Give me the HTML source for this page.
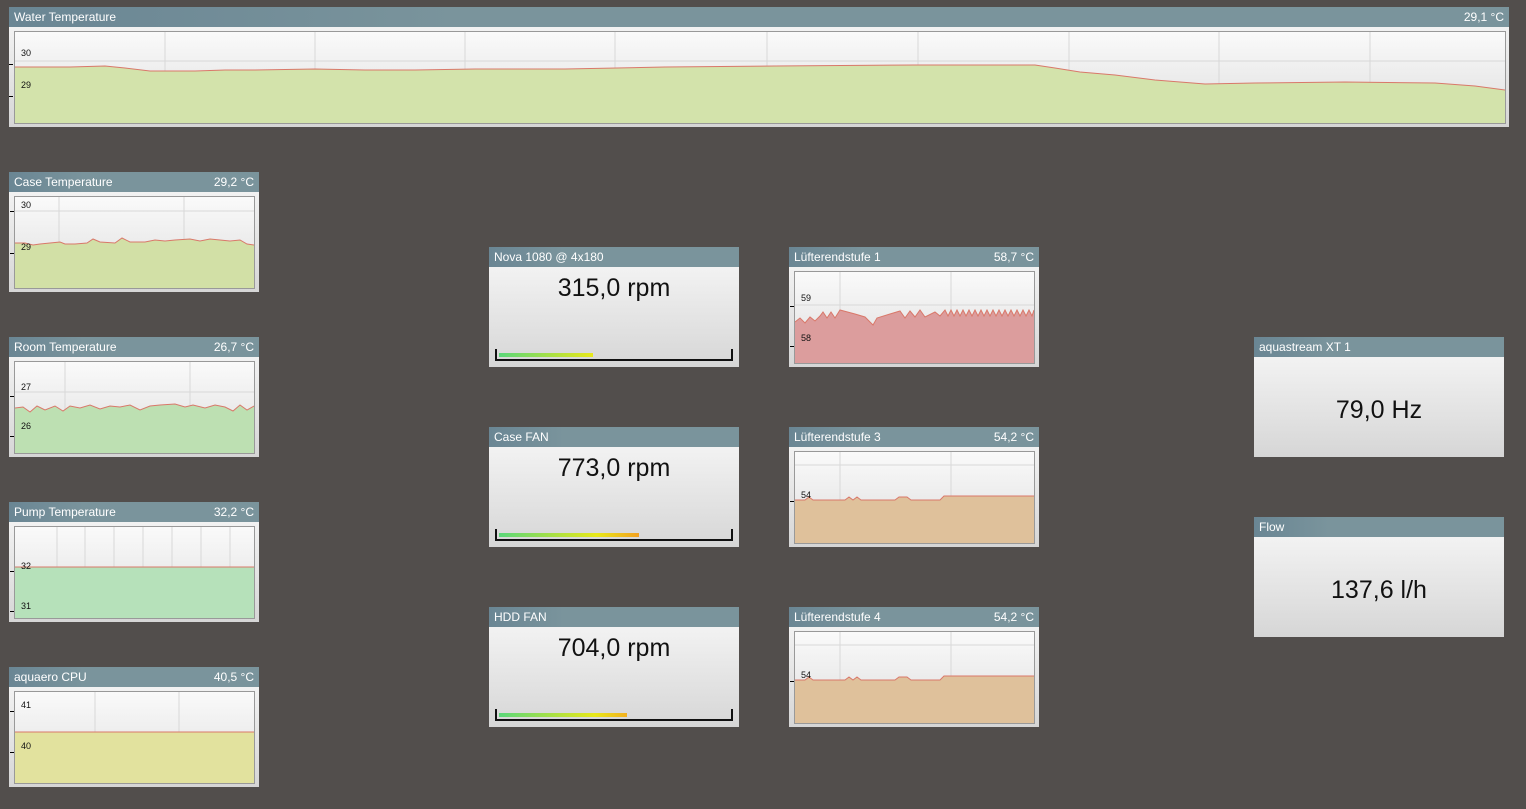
<!DOCTYPE html>
<html><head><meta charset="utf-8"><style>
body{margin:0;width:1526px;height:809px;background:#524e4c;font-family:"Liberation Sans",sans-serif;position:relative;overflow:hidden}
.p{position:absolute;width:250px;height:120px;background:linear-gradient(#f8f8f8,#d6d6d6)}
.h{height:20px;background:linear-gradient(90deg,#6a8694,#7a949c 30%,#7a949c);color:#fff;font-size:12px;line-height:21px;padding:0 5px;display:flex;justify-content:space-between}
.c{position:absolute;left:5px;top:24px;width:239px;height:91px;border:1px solid #999;background:linear-gradient(#fafafa,#dedede)}
.c svg{position:absolute;left:0;top:0}
.l{position:absolute;left:6px;font-size:9px;color:#111}
.t{position:absolute;left:-5px;width:4px;height:1px;background:#000}
.v{position:absolute;left:0;right:0;text-align:center;font-size:25px;color:#111}
.bar{position:absolute;left:6px;right:6px;top:102px;height:10px;border:2px solid #111;border-top:none}
.bar div{position:absolute;left:2px;bottom:2px;height:4px}
</style></head><body>

<div class="p" style="left:9px;top:7px;width:1500px">
<div class="h"><span>Water Temperature</span><span>29,1 °C</span></div>
<div class="c" style="width:1490px">
<svg width="1490" height="91"><g stroke="#d8d8d8"><line x1="150" y1="0" x2="150" y2="91"/><line x1="300" y1="0" x2="300" y2="91"/><line x1="450" y1="0" x2="450" y2="91"/><line x1="600" y1="0" x2="600" y2="91"/><line x1="752" y1="0" x2="752" y2="91"/><line x1="903" y1="0" x2="903" y2="91"/><line x1="1054" y1="0" x2="1054" y2="91"/><line x1="1204" y1="0" x2="1204" y2="91"/><line x1="1355" y1="0" x2="1355" y2="91"/><line x1="0" y1="29" x2="1490" y2="29"/></g>
<polygon fill="#d3e3ab" points="0,35 55,35 90,34 110,36 135,39 180,39 210,38 240,38 300,37 350,38 400,38 460,37 550,37 650,35 760,34 900,33 1020,33 1040,36 1065,40 1100,43 1140,48 1190,52 1240,51 1330,50 1420,51 1460,54 1490,58 1490,91 0,91"/>
<polyline fill="none" stroke="#d9786a" points="0,35 55,35 90,34 110,36 135,39 180,39 210,38 240,38 300,37 350,38 400,38 460,37 550,37 650,35 760,34 900,33 1020,33 1040,36 1065,40 1100,43 1140,48 1190,52 1240,51 1330,50 1420,51 1460,54 1490,58"/></svg>
<span class="l" style="top:16px">30</span><span class="l" style="top:48px">29</span>
<div class="t" style="top:32px;left:-6px"></div><div class="t" style="top:64px;left:-6px"></div></div>
</div>

<div class="p" style="left:9px;top:172px">
<div class="h"><span>Case Temperature</span><span>29,2 °C</span></div>
<div class="c"><svg width="239" height="91"><g stroke="#d8d8d8"><line x1="44" y1="0" x2="44" y2="91"/><line x1="169" y1="0" x2="169" y2="91"/><line x1="0" y1="14" x2="239" y2="14"/></g>
<polygon fill="#d2e0a6" points="0,46 10,46 18,48 25,47 35,46 45,45 50,47 60,47 72,46 78,42 85,45 100,46 107,41 115,45 130,45 140,43 150,44 160,43 175,42 185,44 195,42 205,43 215,44 225,43 232,47 239,48 239,91 0,91"/>
<polyline fill="none" stroke="#d9786a" points="0,46 10,46 18,48 25,47 35,46 45,45 50,47 60,47 72,46 78,42 85,45 100,46 107,41 115,45 130,45 140,43 150,44 160,43 175,42 185,44 195,42 205,43 215,44 225,43 232,47 239,48"/></svg>
<span class="l" style="top:3px">30</span><span class="l" style="top:45px">29</span><div class="t" style="top:14px"></div><div class="t" style="top:56px"></div></div></div>

<div class="p" style="left:9px;top:337px">
<div class="h"><span>Room Temperature</span><span>26,7 °C</span></div>
<div class="c"><svg width="239" height="91"><g stroke="#d8d8d8"><line x1="50" y1="0" x2="50" y2="91"/><line x1="175" y1="0" x2="175" y2="91"/><line x1="0" y1="30" x2="239" y2="30"/></g>
<polygon fill="#bde0b2" points="0,46 8,45 15,50 22,44 30,48 40,44 48,49 55,44 65,46 75,43 85,47 95,44 105,45 115,43 125,48 135,44 145,43 160,42 170,45 178,43 190,46 200,43 210,45 218,49 225,43 232,48 239,44 239,91 0,91"/>
<polyline fill="none" stroke="#d9786a" points="0,46 8,45 15,50 22,44 30,48 40,44 48,49 55,44 65,46 75,43 85,47 95,44 105,45 115,43 125,48 135,44 145,43 160,42 170,45 178,43 190,46 200,43 210,45 218,49 225,43 232,48 239,44"/></svg>
<span class="l" style="top:20px">27</span><span class="l" style="top:59px">26</span><div class="t" style="top:34px"></div><div class="t" style="top:74px"></div></div></div>

<div class="p" style="left:9px;top:502px">
<div class="h"><span>Pump Temperature</span><span>32,2 °C</span></div>
<div class="c"><svg width="239" height="91"><g stroke="#d8d8d8"><line x1="42" y1="0" x2="42" y2="91"/><line x1="70" y1="0" x2="70" y2="91"/><line x1="99" y1="0" x2="99" y2="91"/><line x1="128" y1="0" x2="128" y2="91"/><line x1="157" y1="0" x2="157" y2="91"/><line x1="186" y1="0" x2="186" y2="91"/><line x1="215" y1="0" x2="215" y2="91"/></g>
<rect y="40" width="239" height="51" fill="#b6e1ba"/><line x1="0" y1="40" x2="239" y2="40" stroke="#d9786a"/></svg>
<span class="l" style="top:34px">32</span><span class="l" style="top:74px">31</span><div class="t" style="top:44px"></div><div class="t" style="top:84px"></div></div></div>

<div class="p" style="left:9px;top:667px">
<div class="h"><span>aquaero CPU</span><span>40,5 °C</span></div>
<div class="c"><svg width="239" height="91"><g stroke="#d8d8d8"><line x1="80" y1="0" x2="80" y2="91"/><line x1="164" y1="0" x2="164" y2="91"/></g>
<rect y="40" width="239" height="51" fill="#e2e29e"/><line x1="0" y1="40" x2="239" y2="40" stroke="#d9786a"/></svg>
<span class="l" style="top:8px">41</span><span class="l" style="top:49px">40</span><div class="t" style="top:19px"></div><div class="t" style="top:60px"></div></div></div>

<div class="p" style="left:489px;top:247px"><div class="h"><span>Nova 1080 @ 4x180</span><span></span></div>
<div class="v" style="top:27px">315,0 rpm</div><div class="bar"><div style="width:94px;background:linear-gradient(90deg,#5ad77a,#e8e81a)"></div></div></div>
<div class="p" style="left:489px;top:427px"><div class="h"><span>Case FAN</span><span></span></div>
<div class="v" style="top:27px">773,0 rpm</div><div class="bar"><div style="width:140px;background:linear-gradient(90deg,#5ad77a,#e8e81a 70%,#f2a020)"></div></div></div>
<div class="p" style="left:489px;top:607px"><div class="h"><span>HDD FAN</span><span></span></div>
<div class="v" style="top:27px">704,0 rpm</div><div class="bar"><div style="width:128px;background:linear-gradient(90deg,#5ad77a,#e8e81a 75%,#f2b020)"></div></div></div>

<div class="p" style="left:789px;top:247px">
<div class="h"><span>Lüfterendstufe 1</span><span>58,7 °C</span></div>
<div class="c"><svg width="239" height="91"><g stroke="#d8d8d8"><line x1="45" y1="0" x2="45" y2="91"/><line x1="156" y1="0" x2="156" y2="91"/><line x1="0" y1="33" x2="239" y2="33"/></g>
<polygon fill="#dc9d9d" points="0,50 5,46 10,51 15,45 20,49 25,44 28,40 32,46 36,40 40,46 45,38 60,42 70,45 78,53 82,46 95,42 105,39 110,46 115,39 120,45 125,38 130,45 140,40 145,44 150,38 153,44 156,38 159,44 162,38 165,44 168,38 171,44 174,38 177,44 180,38 183,44 186,38 189,44 192,38 195,44 198,38 201,44 204,38 207,44 210,38 213,44 216,38 219,44 222,38 225,44 228,38 231,44 234,38 237,44 239,38 239,91 0,91"/>
<polyline fill="none" stroke="#d9786a" points="0,50 5,46 10,51 15,45 20,49 25,44 28,40 32,46 36,40 40,46 45,38 60,42 70,45 78,53 82,46 95,42 105,39 110,46 115,39 120,45 125,38 130,45 140,40 145,44 150,38 153,44 156,38 159,44 162,38 165,44 168,38 171,44 174,38 177,44 180,38 183,44 186,38 189,44 192,38 195,44 198,38 201,44 204,38 207,44 210,38 213,44 216,38 219,44 222,38 225,44 228,38 231,44 234,38 237,44 239,38"/></svg>
<span class="l" style="top:21px">59</span><span class="l" style="top:61px">58</span><div class="t" style="top:34px"></div><div class="t" style="top:74px"></div></div></div>

<div class="p" style="left:789px;top:427px">
<div class="h"><span>Lüfterendstufe 3</span><span>54,2 °C</span></div>
<div class="c"><svg width="239" height="91"><g stroke="#d8d8d8"><line x1="45" y1="0" x2="45" y2="91"/><line x1="156" y1="0" x2="156" y2="91"/><line x1="0" y1="13" x2="239" y2="13"/></g>
<polygon fill="#dfc19b" points="0,48 10,48 14,45 18,48 50,48 54,45 58,48 62,45 66,48 100,48 104,45 112,45 116,48 145,48 149,44 239,44 239,91 0,91"/>
<polyline fill="none" stroke="#d9786a" points="0,48 10,48 14,45 18,48 50,48 54,45 58,48 62,45 66,48 100,48 104,45 112,45 116,48 145,48 149,44 150,44 239,44"/></svg>
<span class="l" style="top:38px">54</span><div class="t" style="top:49px"></div></div></div>

<div class="p" style="left:789px;top:607px">
<div class="h"><span>Lüfterendstufe 4</span><span>54,2 °C</span></div>
<div class="c"><svg width="239" height="91"><g stroke="#d8d8d8"><line x1="45" y1="0" x2="45" y2="91"/><line x1="156" y1="0" x2="156" y2="91"/><line x1="0" y1="13" x2="239" y2="13"/></g>
<polygon fill="#dfc19b" points="0,48 10,48 14,45 18,48 50,48 54,45 58,48 62,45 66,48 100,48 104,45 112,45 116,48 145,48 149,44 239,44 239,91 0,91"/>
<polyline fill="none" stroke="#d9786a" points="0,48 10,48 14,45 18,48 50,48 54,45 58,48 62,45 66,48 100,48 104,45 112,45 116,48 145,48 149,44 239,44"/></svg>
<span class="l" style="top:38px">54</span><div class="t" style="top:49px"></div></div></div>

<div class="p" style="left:1254px;top:337px"><div class="h"><span>aquastream XT 1</span><span></span></div>
<div class="v" style="top:59px">79,0 Hz</div></div>
<div class="p" style="left:1254px;top:517px"><div class="h"><span>Flow</span><span></span></div>
<div class="v" style="top:59px">137,6 l/h</div></div>
</body></html>
